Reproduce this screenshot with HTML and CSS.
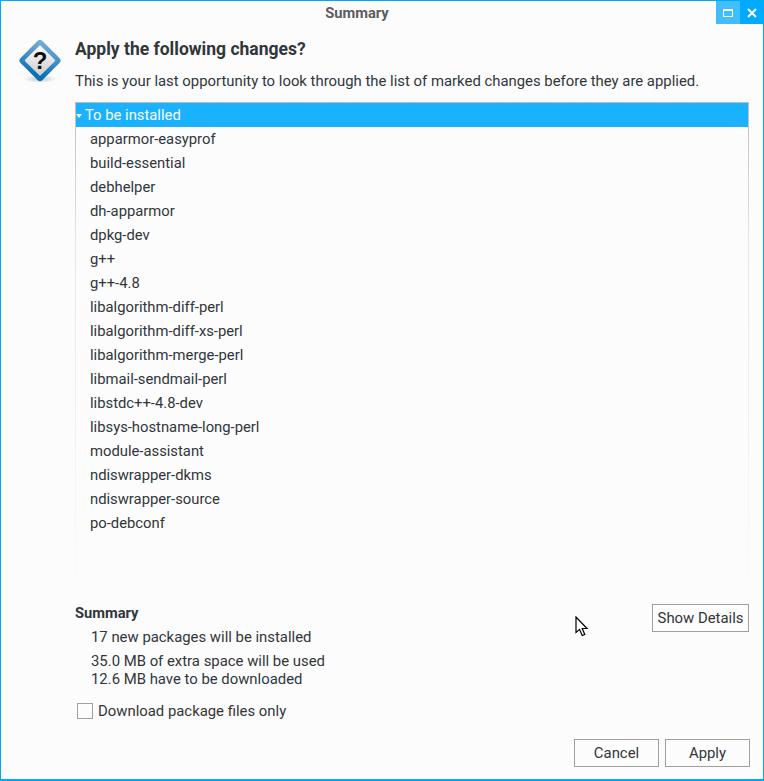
FILE: index.html
```html
<!DOCTYPE html>
<html lang="en">
<head>
<meta charset="utf-8">
<title>Summary</title>
<link rel="stylesheet" href="styles.css">
</head>
<body>
<div class="window">
  <header class="titlebar">
    <span class="title">Summary</span>
    <div class="controls">
      <button class="ctl ctl-max" aria-label="Maximize"><svg width="10" height="8" viewBox="0 0 10 8"><rect x="0.5" y="0.5" width="9" height="7" fill="none" stroke="#fff" stroke-width="1"/><rect x="0" y="0" width="10" height="2" fill="#fff"/></svg></button>
      <button class="ctl ctl-close" aria-label="Close"><svg width="10" height="10" viewBox="0 0 10 10"><path d="M1 1L9 9M9 1L1 9" stroke="#fff" stroke-width="2"/></svg></button>
    </div>
  </header>
  <div class="content">
    <section class="intro">
      <svg class="qicon" width="46" height="46" viewBox="0 0 46 46">
        <defs>
          <linearGradient id="edge" x1="0" y1="0" x2="0.6" y2="1"><stop offset="0" stop-color="#7db2d8"/><stop offset="1" stop-color="#0b6fb5"/></linearGradient>
          <linearGradient id="face" x1="0" y1="0" x2="1" y2="1"><stop offset="0" stop-color="#fdfdfd"/><stop offset="1" stop-color="#cdcdcd"/></linearGradient>
          <radialGradient id="shade"><stop offset="0" stop-color="#000" stop-opacity="0.22"/><stop offset="1" stop-color="#000" stop-opacity="0"/></radialGradient>
        </defs>
        <ellipse cx="23" cy="41" rx="17" ry="4" fill="url(#shade)"/>
        <rect x="7.5" y="7" width="31" height="31" rx="3.5" transform="rotate(45 23 22.5)" fill="url(#edge)"/>
        <rect x="12" y="11.5" width="22" height="22" rx="1" transform="rotate(45 23 22.5)" fill="url(#face)"/>
        <text class="qmark" x="23" y="31" text-anchor="middle">?</text>
      </svg>
      <div class="intro-text">
        <h1>Apply the following changes?</h1>
        <p>This is your last opportunity to look through the list of marked changes before they are applied.</p>
      </div>
    </section>
    <div class="list">
      <div class="group"><span class="arrow"></span>To be installed</div>
      <div class="row">apparmor-easyprof</div>
      <div class="row">build-essential</div>
      <div class="row">debhelper</div>
      <div class="row">dh-apparmor</div>
      <div class="row">dpkg-dev</div>
      <div class="row">g++</div>
      <div class="row">g++-4.8</div>
      <div class="row">libalgorithm-diff-perl</div>
      <div class="row">libalgorithm-diff-xs-perl</div>
      <div class="row">libalgorithm-merge-perl</div>
      <div class="row">libmail-sendmail-perl</div>
      <div class="row">libstdc++-4.8-dev</div>
      <div class="row">libsys-hostname-long-perl</div>
      <div class="row">module-assistant</div>
      <div class="row">ndiswrapper-dkms</div>
      <div class="row">ndiswrapper-source</div>
      <div class="row">po-debconf</div>
    </div>
    <section class="summary">
      <div class="summary-text">
        <h2>Summary</h2>
        <p class="s1">17 new packages will be installed</p>
        <p class="s2">35.0 MB of extra space will be used</p>
        <p class="s3">12.6 MB have to be downloaded</p>
      </div>
      <button class="btn btn-details">Show Details</button>
    </section>
    <label class="check"><span class="box"></span>Download package files only</label>
    <footer class="actions">
      <button class="btn btn-action">Cancel</button>
      <button class="btn btn-action">Apply</button>
    </footer>
  </div>
  <svg class="cursor" width="14" height="22" viewBox="0 0 14 22"><path d="M1 1V16.5L4.6 13.4L7.2 19.5L9.8 18.4L7.2 12.5H12Z" fill="#fff" stroke="#000" stroke-width="1.2"/></svg>
</div>
</body>
</html>
```
FILE: styles.css
```css
* { box-sizing: border-box; }
html, body { margin: 0; padding: 0; }
body { width: 764px; height: 781px; overflow: hidden; font-family: Roboto, sans-serif; color: #31363b; }
.window { position: relative; width: 764px; height: 781px; background: #fcfcfc; border: 1px solid #00a8f6; border-width: 1px 1px 2px 1px; display: flex; flex-direction: column; }
.titlebar { height: 24px; position: relative; display: flex; justify-content: flex-end; flex: none; }
.title { position: absolute; left: 0; right: 50px; top: 4px; text-align: center; font-size: 14.7px; line-height: 17px; font-weight: 700; color: #5c5c5c; }
.controls { display: flex; margin-right: -1px; }
.ctl { width: 24px; height: 23px; border: 0; padding: 0; display: flex; align-items: center; justify-content: center; }
.ctl-max { background: #40bfff; }
.ctl-close { background: #00aaff; }
.content { flex: 1; display: flex; flex-direction: column; padding: 0 14px 0 74px; min-height: 0; }
.intro { position: relative; padding-top: 14px; height: 77px; flex: none; }
.qicon { position: absolute; left: -58px; top: 13px; }
.qmark { font: 700 24px "Liberation Sans", sans-serif; fill: #111; }
.intro-text h1 { margin: 0; font-size: 17.5px; line-height: 20px; font-weight: 700; color: #31363b; }
.intro-text p { margin: 14px 0 0; font-size: 14.88px; line-height: 17px; }
.list { height: 476px; flex: none; border: 1px solid #bdbdbd; border-bottom: 0; border-image: linear-gradient(#bdbdbd 0, #e6e6e6 30%, #fafafa 100%) 1; font-size: 14.8px; }
.group { height: 24px; background: #1ab2ff; color: #fcfcfc; line-height: 24px; padding-left: 9px; position: relative; }
.arrow { position: absolute; left: 0; top: 11px; border: 3px solid transparent; border-top: 4px solid #fff; border-bottom: 0; }
.row { height: 24px; line-height: 24px; padding-left: 14px; }
.summary { display: flex; justify-content: space-between; align-items: flex-start; margin-top: 27px; font-size: 14.88px; flex: none; }
.summary h2 { margin: 0; font-size: 14.7px; line-height: 17px; font-weight: 700; }
.summary p { margin: 0; padding-left: 16px; line-height: 17px; }
.s1 { margin-top: 7px !important; }
.s2 { margin-top: 7px !important; }
.s3 { margin-top: 1px !important; }
.btn { background: #fcfcfc; border: 1px solid #a0a0a0; border-radius: 0; font: 14.88px Roboto, sans-serif; color: #31363b; padding: 0; }
.btn-details { width: 97px; height: 28px; margin-top: -1px; }
.check { display: flex; align-items: center; gap: 5px; margin-top: 14px; margin-left: 2px; height: 18px; font-size: 14.88px; flex: none; }
.box { width: 16px; height: 16px; border: 1px solid #a0a0a0; background: #fcfcfc; }
.actions { display: flex; justify-content: flex-end; gap: 6px; margin-top: 19px; margin-right: -1px; flex: none; }
.btn-action { width: 85px; height: 28px; }
.cursor { position: absolute; left: 574px; top: 615px; }
```
